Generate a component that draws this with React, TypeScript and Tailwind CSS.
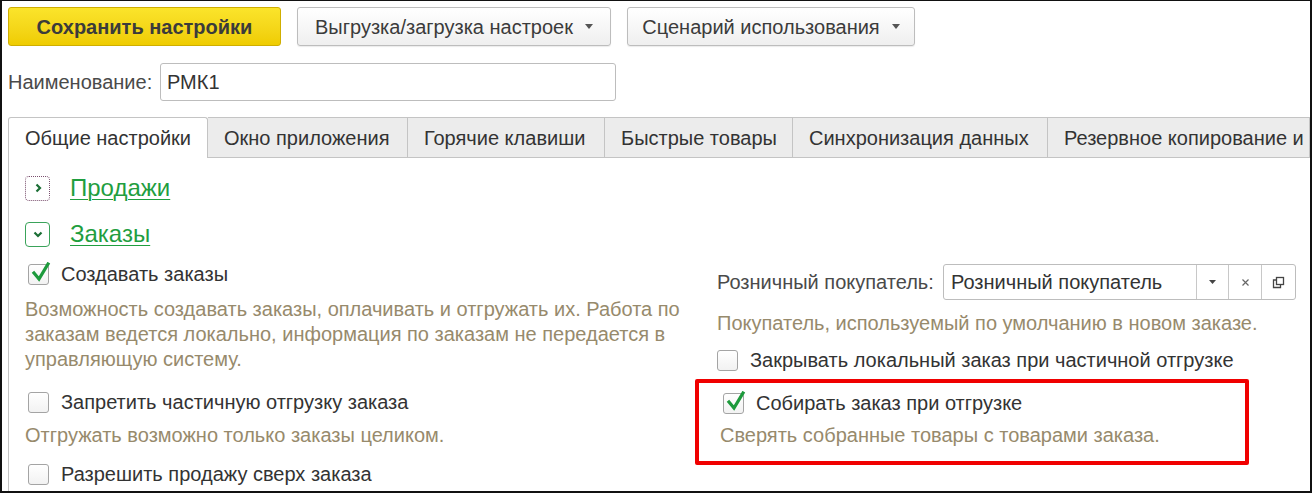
import React, { useState } from "react";

// small triangle used on dropdown buttons
const Caret: React.FC<{ className?: string }> = ({ className }) => (
  <svg width="8" height="5" viewBox="0 0 8 5" className={className}>
    <path d="M0 0 L8 0 L4 5 Z" fill="#555" />
  </svg>
);

const CheckBox: React.FC<{ checked: boolean; onToggle: () => void }> = ({
  checked,
  onToggle,
}) => (
  <span
    onClick={onToggle}
    className="relative inline-block w-[21px] h-[21px] shrink-0 rounded-[3px] border border-[#a4a4a4] bg-gradient-to-b from-white to-[#f2f2f2] cursor-pointer"
  >
    {checked && (
      <svg
        width="22"
        height="22"
        viewBox="0 0 22 22"
        className="absolute left-[1px] -top-[3px]"
      >
        <path
          d="M4 11 L9 17 L18 2"
          fill="none"
          stroke="#1d9a3c"
          strokeWidth="3.2"
          strokeLinecap="square"
        />
      </svg>
    )}
  </span>
);

interface OptionProps {
  label: string;
  checked: boolean;
  onToggle: () => void;
}
const Option: React.FC<OptionProps> = ({ label, checked, onToggle }) => (
  <label className="flex items-center gap-[12px] h-[24px] text-[#333]">
    <CheckBox checked={checked} onToggle={onToggle} />
    <span>{label}</span>
  </label>
);

const Hint: React.FC<{ children: React.ReactNode; className?: string }> = ({
  children,
  className,
}) => <p className={`text-[#978a6c] leading-[25px] ${className ?? ""}`}>{children}</p>;

const Group: React.FC<{ title: string; open: boolean; focused?: boolean }> = ({
  title,
  open,
  focused,
}) => (
  <div className="flex items-center h-[26px]">
    <span
      className={`flex items-center justify-center w-[25px] h-[25px] rounded-[4px] border-[1.5px] ${
        focused ? "border-dotted border-[#7a4f6e]" : "border-[#3aa35a]"
      }`}
    >
      <svg width="12" height="12" viewBox="0 0 12 12">
        <path
          d={open ? "M2.5 4.5 L6 8 L9.5 4.5" : "M4.5 2.5 L8 6 L4.5 9.5"}
          fill="none"
          stroke="#1b6e35"
          strokeWidth="2.2"
        />
      </svg>
    </span>
    <a className="ml-[20px] text-[24px] text-[#1f9e3f] underline underline-offset-[3px] decoration-1 cursor-pointer">
      {title}
    </a>
  </div>
);

const tabs = [
  { name: "Общие настройки", w: "w-[200px]" },
  { name: "Окно приложения", w: "w-[200px]" },
  { name: "Горячие клавиши", w: "w-[197px]" },
  { name: "Быстрые товары", w: "w-[188px]" },
  { name: "Синхронизация данных", w: "w-[255px]" },
  { name: "Резервное копирование и", w: "w-[262px]" },
];

const App: React.FC = () => {
  const [active, setActive] = useState(0);
  const [opts, setOpts] = useState({
    createOrders: true,
    denyPartial: false,
    allowOver: false,
    closeLocal: false,
    collect: true,
  });
  const toggle = (key: keyof typeof opts) =>
    setOpts((o) => ({ ...o, [key]: !o[key] }));

  return (
    <div
      className="w-[1312px] h-[493px] overflow-hidden border-2 border-t border-[#111] bg-white text-[20px] text-[#333]"
      style={{ fontFamily: '"Liberation Sans", Arial, sans-serif' }}
    >
      <div className="pl-[6px] pt-[6px]">
        {/* toolbar */}
        <div className="flex gap-[16px]">
          <button className="w-[273px] h-[39px] rounded-[3px] border border-[#cfae00] bg-gradient-to-b from-[#fbe42a] to-[#efcc00] font-bold text-[#3b3b3b]">
            Сохранить настройки
          </button>
          <button className="flex items-center justify-center gap-[12px] w-[314px] h-[39px] rounded-[3px] border border-[#bdbdbd] bg-gradient-to-b from-white to-[#efefef] text-[#3b3b3b] shadow-[0_1px_1px_rgba(0,0,0,0.08)]">
            Выгрузка/загрузка настроек
            <Caret />
          </button>
          <button className="flex items-center justify-center gap-[12px] w-[288px] h-[39px] rounded-[3px] border border-[#bdbdbd] bg-gradient-to-b from-white to-[#efefef] text-[#3b3b3b] shadow-[0_1px_1px_rgba(0,0,0,0.08)]">
            Сценарий использования
            <Caret />
          </button>
        </div>

        {/* name */}
        <div className="flex items-center mt-[17px]">
          <span className="w-[152px] text-[#4a4a4a]">Наименование:</span>
          <input
            defaultValue="РМК1"
            className="w-[456px] h-[38px] px-[6px] rounded-[3px] border border-[#bdbdbd] text-[#333] outline-none"
          />
        </div>

        {/* tabs */}
        <div className="flex mt-[16px] h-[41px] whitespace-nowrap">
          {tabs.map((t, i) => (
            <div
              key={t.name}
              onClick={() => setActive(i)}
              className={`${t.w} shrink-0 overflow-hidden px-[16px] flex items-center cursor-pointer border-t border-r border-[#c4c4c4] ${
                i === 0 ? "border-l" : ""
              } ${
                i === active
                  ? "bg-white border-b-0 rounded-t-[3px]"
                  : "bg-[#ececec] border-b"
              }`}
            >
              {t.name}
            </div>
          ))}
        </div>

        {/* tab content */}
        <div className="border-l border-[#c4c4c4] pl-[16px] pt-[17px] h-[340px]">
          <Group title="Продажи" open={false} focused />
          <div className="mt-[20px]">
            <Group title="Заказы" open />
          </div>

          <div className="flex mt-[15px]">
            {/* left column */}
            <div className="w-[692px] pl-[3px]">
              <Option
                label="Создавать заказы"
                checked={opts.createOrders}
                onToggle={() => toggle("createOrders")}
              />
              <Hint className="mt-[11px] -ml-[3px] w-[678px]">
                Возможность создавать заказы, оплачивать и отгружать их. Работа по
                заказам ведется локально, информация по заказам не передается в
                управляющую систему.
              </Hint>
              <div className="mt-[18px]">
                <Option
                  label="Запретить частичную отгрузку заказа"
                  checked={opts.denyPartial}
                  onToggle={() => toggle("denyPartial")}
                />
              </div>
              <Hint className="mt-[9px] -ml-[3px]">
                Отгружать возможно только заказы целиком.
              </Hint>
              <div className="mt-[14px]">
                <Option
                  label="Разрешить продажу сверх заказа"
                  checked={opts.allowOver}
                  onToggle={() => toggle("allowOver")}
                />
              </div>
            </div>

            {/* right column */}
            <div className="pt-[2px]">
              <div className="flex items-center">
                <span className="w-[226px] text-[#4a4a4a]">Розничный покупатель:</span>
                <div className="flex w-[353px] h-[36px] rounded-[3px] border border-[#bdbdbd]">
                  <span className="flex-1 flex items-center px-[7px] text-[#333]">
                    Розничный покупатель
                  </span>
                  <span className="w-[32px] flex items-center justify-center border-l border-[#c8c8c8]">
                    <svg width="7" height="4" viewBox="0 0 7 4">
                      <path d="M0 0 L7 0 L3.5 4 Z" fill="#444" />
                    </svg>
                  </span>
                  <span className="w-[33px] flex items-center justify-center border-l border-[#c8c8c8]">
                    <svg width="9" height="9" viewBox="0 0 9 9">
                      <path d="M1.5 1.5 L7.5 7.5 M7.5 1.5 L1.5 7.5" stroke="#666" strokeWidth="1.2" />
                    </svg>
                  </span>
                  <span className="w-[34px] flex items-center justify-center border-l border-[#c8c8c8]">
                    <svg width="13" height="13" viewBox="0 0 13 13">
                      <rect x="4.5" y="1.5" width="7" height="7" fill="none" stroke="#444" strokeWidth="1.3" />
                      <path d="M4.5 4 H1.5 V11.5 H8.5 V8.5" fill="none" stroke="#444" strokeWidth="1.3" />
                    </svg>
                  </span>
                </div>
              </div>
              <Hint className="mt-[11px]">
                Покупатель, используемый по умолчанию в новом заказе.
              </Hint>
              <div className="mt-[12px]">
                <Option
                  label="Закрывать локальный заказ при частичной отгрузке"
                  checked={opts.closeLocal}
                  onToggle={() => toggle("closeLocal")}
                />
              </div>
              <div className="mt-[7px] -ml-[22px] w-[554px] h-[86px] rounded-[2px] border-4 border-[#f00000] pl-[21px] pt-[8px]">
                <div className="pl-[3px]">
                  <Option
                    label="Собирать заказ при отгрузке"
                    checked={opts.collect}
                    onToggle={() => toggle("collect")}
                  />
                </div>
                <Hint className="mt-[8px]">
                  Сверять собранные товары с товарами заказа.
                </Hint>
              </div>
            </div>
          </div>
        </div>
      </div>
    </div>
  );
};

export default App;
